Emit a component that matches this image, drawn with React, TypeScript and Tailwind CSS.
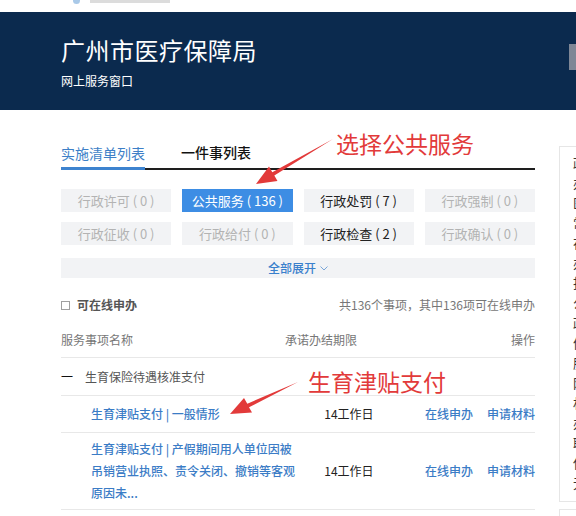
import React from 'react';

const font = { fontFamily: '"Noto Sans CJK SC", "Noto Sans", sans-serif' };

const filters = [
  { label: '行政许可', count: 0 },
  { label: '公共服务', count: 136, active: true },
  { label: '行政处罚', count: 7 },
  { label: '行政强制', count: 0 },
  { label: '行政征收', count: 0 },
  { label: '行政给付', count: 0 },
  { label: '行政检查', count: 2 },
  { label: '行政确认', count: 0 },
];

function FilterButton({ label, count, active }: { label: string; count: number; active?: boolean }) {
  const tone = active
    ? 'bg-[#3d8de4] text-white'
    : count > 0
      ? 'bg-[#f2f3f5] text-[#222]'
      : 'bg-[#f2f3f5] text-[#b3b3b3]';
  return (
    <div className={`flex h-[23px] items-center justify-center whitespace-nowrap text-[13px] leading-none ${tone}`}>
      {label} ( {count} )
    </div>
  );
}

function Arrow({ points }: { points: string }) {
  return <polygon points={points} fill="#e23a3a" />;
}

export default function App() {
  return (
    <div className="relative h-[516px] w-[576px] overflow-hidden bg-white" style={font}>
      {/* strip above the banner */}
      <div className="flex h-[12px] items-start gap-[10px] pl-[73px]">
        <span className="h-[4px] w-[7px] rounded-b-full bg-[#a9c9e8]" />
        <span className="h-[3px] w-[80px] bg-[#dcdcdc]" />
      </div>

      <header className="h-[98px] bg-[#0b2a4e] pl-[61px] pt-[26px] text-white">
        <h1 className="text-[24px] leading-[24px] tracking-[0.5px]">广州市医疗保障局</h1>
        <p className="mt-[13px] text-[12px] leading-[12px]">网上服务窗口</p>
      </header>
      <div className="absolute right-0 top-[44px] h-[26px] w-[7px] bg-[#7f8796]" />

      <div className="flex w-[700px]">
        <main className="ml-[61px] w-[474px] shrink-0">
          <nav className="mt-[35px] flex items-end gap-[36px] border-b-2 border-[#1e1e1e]">
            <span className="-mb-[2px] border-b-[3px] border-[#3d83cf] pb-[7px] text-[14px] leading-[14px] text-[#3d7fc7]">
              实施清单列表
            </span>
            <span className="pb-[9px] text-[14px] font-medium leading-[14px] text-[#111]">一件事列表</span>
          </nav>

          <div className="mt-[19px] grid grid-cols-4 gap-x-[11px] gap-y-[10px]">
            {filters.map((f) => (
              <FilterButton key={f.label} {...f} />
            ))}
          </div>

          <button className="mt-[13px] flex h-[20px] w-full items-center justify-center gap-[4px] bg-[#f2f3f5] text-[12px] font-medium text-[#3a80cc]">
            全部展开
            <svg width="8" height="5" viewBox="0 0 8 5" fill="none" stroke="#7aa6d8" strokeWidth="1">
              <path d="M0.5 0.5 L4 4 L7.5 0.5" />
            </svg>
          </button>

          <div className="mt-[17px] flex h-[20px] items-center justify-between text-[12px]">
            <label className="flex items-center gap-[7px] font-bold text-[#555]">
              <span className="h-[9px] w-[9px] border border-[#a0a0a0]" />
              可在线申办
            </label>
            <span className="text-[#777]">共136个事项，其中136项可在线申办</span>
          </div>

          <div className="mt-[7px] flex h-[36px] items-center border-b border-[#e8e8e8] text-[12px] text-[#777]">
            <span className="w-[224px]">服务事项名称</span>
            <span className="flex-1">承诺办结期限</span>
            <span>操作</span>
          </div>

          <div className="flex h-[38px] items-center gap-[12px] border-b border-[#e8e8e8] text-[12px] text-[#555]">
            <span className="text-[#111]">一</span>
            <span>生育保险待遇核准支付</span>
          </div>

          <div className="flex h-[37px] items-center whitespace-nowrap border-b border-[#e8e8e8] pl-[30px] text-[12px]">
            <span className="w-[234px] font-medium text-[#3b7cc6]">生育津贴支付 | 一般情形</span>
            <span className="w-[101px] text-[#222]">14工作日</span>
            <span className="font-medium text-[#3b7cc6]">在线申办</span>
            <span className="ml-[14px] font-medium text-[#3b7cc6]">申请材料</span>
          </div>

          <div className="flex h-[77px] items-center border-b border-[#e8e8e8] pl-[30px] text-[12px]">
            <span className="w-[234px] pr-[24px] font-medium leading-[22px] text-[#3b7cc6]">
              生育津贴支付 | 产假期间用人单位因被吊销营业执照、责令关闭、撤销等客观原因未...
            </span>
            <span className="w-[101px] whitespace-nowrap text-[#222]">14工作日</span>
            <span className="whitespace-nowrap font-medium text-[#3b7cc6]">在线申办</span>
            <span className="ml-[14px] whitespace-nowrap font-medium text-[#3b7cc6]">申请材料</span>
          </div>
        </main>

        <aside className="ml-[24px] mt-[36px] flex w-[120px] shrink-0 flex-col">
          <div className="h-[356px] border border-[#e6e6e6] pl-[13px] pt-[6px] text-[13px] leading-[20px] text-[#333]">
            {['政务服务', '办事指南', '医保业务', '常见问题', '在线咨询', '办件查询', '投诉建议', '公开信息', '政策法规', '便民服务', '服务评价', '网上预约', '材料下载', '办事流程', '联系我们', '使用帮助', '无障碍'].map((t) => (
              <div key={t} className="whitespace-nowrap">{t}</div>
            ))}
          </div>
          <div className="mt-[7px] h-[20px] border border-[#e6e6e6]" />
        </aside>
      </div>

      {/* annotations laid over the page */}
      <div className="absolute left-[336px] top-[132px] text-[23px] leading-[23px] text-[#e23a3a]">选择公共服务</div>
      <div className="absolute left-[308px] top-[370px] text-[23px] leading-[23px] text-[#e23a3a]">生育津贴支付</div>
      <svg className="pointer-events-none absolute left-0 top-0" width="576" height="516">
        <Arrow points="333,139 274.3,175.6 277.5,181 256,184 269,166.5 272.3,172.2" />
        <Arrow points="298,382 249,407.3 252,412.5 230,414 244,398 247.3,403.7" />
      </svg>
    </div>
  );
}
